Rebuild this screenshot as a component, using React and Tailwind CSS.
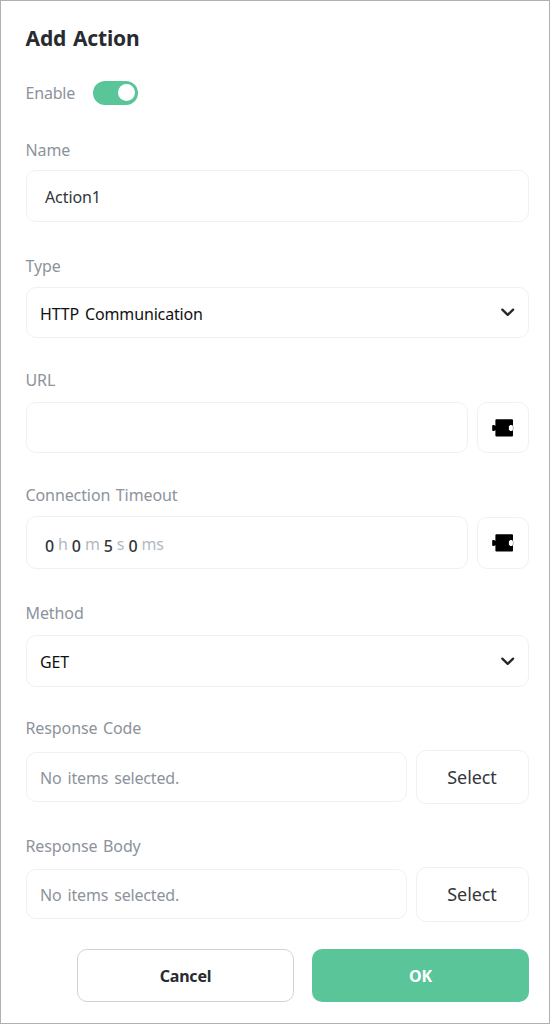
import React from 'react';

function ChevronIcon() {
  return (
    <svg className="w-[14px] h-[9px]" viewBox="0 0 14 9" fill="none" stroke="#23262b" strokeWidth="2.3" strokeLinecap="round" strokeLinejoin="round">
      <path d="M1.3 1.6 L6.7 6.9 L12.1 1.6" />
    </svg>
  );
}

function PuzzleIcon() {
  return (
    <svg className="w-[22px] h-[18px]" viewBox="0 0 22 18" fill="#000000">
      <path d="M4.4 0.3 H20 Q21 0.3 21 1.3 V6.6 H19.9 V5.9 H18 V6.8 H16.9 V11.2 H18 V12.1 H19.9 V11.4 H21 V16.7 Q21 17.4 20 17.4 H4.4 Q3.4 17.4 3.4 16.7 V11.2 H2.6 V12 H1 Q0.2 12 0.2 11.2 V6.8 Q0.2 6 1 6 H2.6 V6.8 H3.4 V1.3 Q3.4 0.3 4.4 0.3 Z" />
      <path d="M20.9 6.8 Q21.8 9 20.9 11.2" fill="none" stroke="#8a8a8a" strokeWidth="0.6" />
    </svg>
  );
}

function Field({ label, className, children }) {
  return (
    <div className={`flex flex-col justify-between ${className}`}>
      <label className="h-6 leading-6 -ml-[0.5px] text-[#8c939c]">{label}</label>
      {children}
    </div>
  );
}

function SelectBox({ value, className }) {
  return (
    <button className={`flex items-center justify-between border border-[#f1f1f2] rounded-[10px] px-[13px] text-[#111111] tracking-[-0.15px] [word-spacing:2px] ${className}`}>
      <span className="pt-0.5">{value}</span>
      <ChevronIcon />
    </button>
  );
}

function VariableButton({ className }) {
  return (
    <button className={`w-[52px] flex items-center justify-center border border-[#f1f1f2] rounded-[10px] ${className}`}>
      <PuzzleIcon />
    </button>
  );
}

function ItemPicker({ boxClass, buttonClass }) {
  return (
    <div className="flex items-center gap-[9px]">
      <div className={`flex-1 flex items-center border border-[#f1f1f2] rounded-[10px] pl-[13px] pt-px text-[#8c939c] tracking-[-0.17px] [word-spacing:2px] ${boxClass}`}>
        No items selected.
      </div>
      <button className={`w-[113px] border border-[#f1f1f2] rounded-[10px] pr-px text-[18px] text-[#33363b] ${buttonClass}`}>
        Select
      </button>
    </div>
  );
}

const timeout = [
  { value: '0', unit: 'h' },
  { value: '0', unit: 'm' },
  { value: '5', unit: 's' },
  { value: '0', unit: 'ms' },
];

export default function App() {
  return (
    <div className="w-[550px] h-[1024px] bg-white border border-[#b0b0b0] pl-[25px] pr-5 pt-[21px] font-['Noto_Sans','Open_Sans',sans-serif] text-[16px] tracking-[-0.1px] [word-spacing:1.5px]">
      <h1 className="h-8 leading-8 -ml-[0.5px] text-[21px] tracking-[-0.15px] font-bold text-[#282b31]">Add Action</h1>

      {/* Enable */}
      <div className="flex items-center h-6 mt-[27px]">
        <span className="w-[67.5px] -ml-[0.5px] tracking-[-0.2px] text-[#8c939c]">Enable</span>
        <button className="w-[45px] h-6 rounded-full bg-[#5bc59a] flex items-center justify-end pr-[3px] pb-px">
          <span className="w-[17px] h-[17px] rounded-full bg-white" />
        </button>
      </div>

      <Field label="Name" className="h-[84px] mt-[33px]">
        <div className="h-[52px] flex items-center border border-[#f1f1f2] rounded-[10px] pl-[18px] pt-0.5 text-[#33363b]">Action1</div>
      </Field>

      <Field label="Type" className="h-[84px] mt-8">
        <SelectBox value="HTTP Communication" className="h-[51px]" />
      </Field>

      <Field label="URL" className="h-[85px] mt-[30px]">
        <div className="flex items-center gap-[9px]">
          <div className="flex-1 h-[51px] border border-[#f1f1f2] rounded-[10px]" />
          <VariableButton className="h-[51px]" />
        </div>
      </Field>

      <Field label="Connection Timeout" className="h-[86px] mt-[30px]">
        <div className="flex items-center gap-[9px]">
          <div className="flex-1 h-[53px] flex items-center border border-[#f1f1f2] rounded-[10px] pl-[18px] pt-[5px] gap-1">
            {timeout.map((part, i) => (
              <span key={i} className="flex gap-1">
                <span className="pt-0.5 font-medium text-[#33363b]">{part.value}</span>
                <span className="text-[#b3b9c1]">{part.unit}</span>
              </span>
            ))}
          </div>
          <VariableButton className="h-[52px]" />
        </div>
      </Field>

      <Field label="Method" className="h-[86px] mt-8">
        <SelectBox value="GET" className="h-[52px]" />
      </Field>

      <Field label="Response Code" className="h-[88px] mt-[29px]">
        <ItemPicker boxClass="h-[50px]" buttonClass="h-[54px] pt-px" />
      </Field>

      <Field label="Response Body" className="h-[88px] mt-[30px]">
        <ItemPicker boxClass="h-[50px] -mt-px" buttonClass="h-[55px]" />
      </Field>

      {/* Footer */}
      <div className="flex justify-end gap-[18px] mt-[27px] font-bold">
        <button className="w-[217px] h-[53px] border border-[#d0d4da] rounded-[10px] text-[#282b31] tracking-[-0.2px]">Cancel</button>
        <button className="w-[217px] h-[53px] rounded-[10px] bg-[#5bc59a] text-white">OK</button>
      </div>
    </div>
  );
}
